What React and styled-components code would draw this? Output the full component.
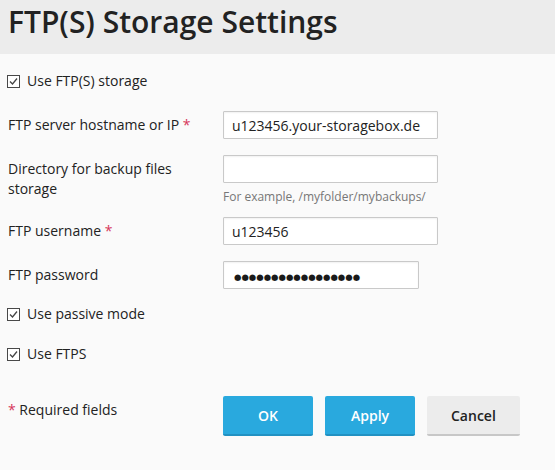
import React from "react";
import styled, { createGlobalStyle } from "styled-components";

const Global = createGlobalStyle`
  html, body { margin: 0; padding: 0; background: #fafafa; }
  body { font-family: "Open Sans", "Liberation Sans", sans-serif; color: #222; font-size: 14px; }
  * { box-sizing: border-box; }
`;

const Page = styled.div`
  width: 555px;
  min-height: 470px;
  background: #fafafa;
`;

const Header = styled.header`
  height: 54px;
  background: #ececec;
  padding: 0 8px;
`;

const Title = styled.h1`
  margin: 0;
  font-size: 30px;
  font-weight: 600;
  line-height: 43px;
  color: #222;
  letter-spacing: 0;
`;

const Body = styled.div`
  padding: 17px 8px 0 8px;
`;

const CheckRow = styled.label`
  display: flex;
  align-items: center;
  gap: 7px;
  height: 20px;
  line-height: 20px;
  margin-left: -1px;
  margin-bottom: ${(p) => (p.$mb != null ? p.$mb : 20)}px;
`;

const Box = styled.span`
  width: 13px;
  height: 13px;
  border: 1px solid #484848;
  background: #fff;
  display: inline-flex;
  align-items: center;
  justify-content: center;
  flex: none;
`;

const Field = styled.div`
  display: flex;
  align-items: flex-start;
  margin-bottom: ${(p) => (p.$mb != null ? p.$mb : 16)}px;
`;

const Label = styled.div`
  width: 215px;
  flex: none;
  padding: 4px 12px 0 0;
  line-height: 20px;
`;

const Req = styled.span`
  color: #d6365a;
`;

const Control = styled.div`
  display: flex;
  flex-direction: column;
`;

const Input = styled.input`
  width: ${(p) => p.$w || 215}px;
  height: 28px;
  border: 1px solid #c9c9c9;
  border-radius: 1px;
  background: #fff;
  box-shadow: inset 0 1px 2px rgba(0, 0, 0, 0.06);
  padding: 0 8px;
  font-family: "Open Sans", "Liberation Sans", sans-serif;
  font-size: 14px;
  color: #222;
  outline: none;
`;

const SecretInput = styled(Input)`
  font-family: "DejaVu Sans", sans-serif;
  font-size: 8.5px;
  padding: 3px 10px 0;
  color: #1a1a1a;
`;

const Hint = styled.div`
  margin-top: 5px;
  font-size: 12px;
  line-height: 17px;
  color: #777;
`;

const Footer = styled.div`
  display: flex;
  align-items: flex-start;
  margin-top: 32px;
`;

const FooterNote = styled.div`
  width: 215px;
  flex: none;
  padding-top: 4px;
  line-height: 20px;
`;

const Buttons = styled.div`
  display: flex;
  gap: 12px;
`;

const Button = styled.button`
  min-width: 90px;
  height: 40px;
  padding: 0 24px;
  border: none;
  border-radius: 2px;
  border-bottom: 2px solid ${(p) => (p.$primary ? "#2191c2" : "#c7c7c7")};
  background: ${(p) => (p.$primary ? "#29a9de" : "#ececec")};
  color: ${(p) => (p.$primary ? "#fff" : "#222")};
  font-family: "Open Sans", "Liberation Sans", sans-serif;
  font-size: 14px;
  font-weight: 600;
  cursor: pointer;
`;

const Check = () => (
  <Box>
    <svg width="11" height="11" viewBox="0 0 11 11">
      <path d="M2 5.5 L4.5 8 L9 2.5" fill="none" stroke="#444" strokeWidth="1.3" />
    </svg>
  </Box>
);

export default function App() {
  return (
    <Page>
      <Global />
      <Header>
        <Title>FTP(S) Storage Settings</Title>
      </Header>
      <Body>
        <CheckRow>
          <Check />
          Use FTP(S) storage
        </CheckRow>
        <Field>
          <Label>
            FTP server hostname or IP <Req>*</Req>
          </Label>
          <Control>
            <Input defaultValue="u123456.your-storagebox.de" />
          </Control>
        </Field>
        <Field $mb={12}>
          <Label>Directory for backup files storage</Label>
          <Control>
            <Input defaultValue="" />
            <Hint>For example, /myfolder/mybackups/</Hint>
          </Control>
        </Field>
        <Field>
          <Label>
            FTP username <Req>*</Req>
          </Label>
          <Control>
            <Input defaultValue="u123456" />
          </Control>
        </Field>
        <Field $mb={15}>
          <Label>FTP password</Label>
          <Control>
            <SecretInput $w={196} readOnly value={"●".repeat(17)} aria-label="FTP password" />
          </Control>
        </Field>
        <CheckRow>
          <Check />
          Use passive mode
        </CheckRow>
        <CheckRow $mb={0}>
          <Check />
          Use FTPS
        </CheckRow>
        <Footer>
          <FooterNote>
            <Req>*</Req> Required fields
          </FooterNote>
          <Buttons>
            <Button $primary>OK</Button>
            <Button $primary>Apply</Button>
            <Button>Cancel</Button>
          </Buttons>
        </Footer>
      </Body>
    </Page>
  );
}
